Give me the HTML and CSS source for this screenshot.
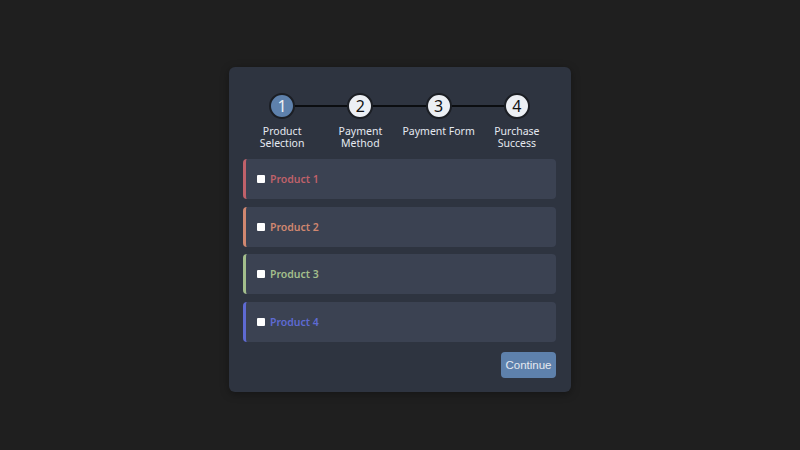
FILE: index.html
```html
<!DOCTYPE html>
<html>
<head>
<meta charset="utf-8">
<link rel="stylesheet" href="styles.css">
</head>
<body>
<div class="card">
  <div class="stepper">
    <div class="line"></div>
    <div class="step active"><div class="dot">1</div><div class="label">Product<br>Selection</div></div>
    <div class="step"><div class="dot">2</div><div class="label">Payment<br>Method</div></div>
    <div class="step"><div class="dot">3</div><div class="label">Payment Form</div></div>
    <div class="step"><div class="dot">4</div><div class="label">Purchase<br>Success</div></div>
  </div>
  <div class="items">
    <label class="item c1"><span class="box"></span><span class="name">Product 1</span></label>
    <label class="item c2"><span class="box"></span><span class="name">Product 2</span></label>
    <label class="item c3"><span class="box"></span><span class="name">Product 3</span></label>
    <label class="item c4"><span class="box"></span><span class="name">Product 4</span></label>
  </div>
  <div class="actions"><button class="btn">Continue</button></div>
</div>
</body>
</html>
```
FILE: styles.css
```css
html, body { margin: 0; padding: 0; }
body {
  background: #1f1f1f;
  width: 800px;
  height: 450px;
  display: flex;
  justify-content: center;
  align-items: flex-start;
  font-family: "Noto Sans", sans-serif;
}
.card {
  margin-top: 67px;
  width: 313px;
  padding: 26px 15px 14px 14px;
  background: #2e3440;
  border-radius: 6px;
  box-shadow: 0 2px 8px rgba(0,0,0,0.35);
}
.stepper {
  position: relative;
  display: flex;
}
.line {
  position: absolute;
  left: 39px;
  right: 39px;
  top: 12px;
  height: 2px;
  background: #0b0d10;
}
.step {
  flex: 1;
  display: flex;
  flex-direction: column;
  align-items: center;
  position: relative;
}
.dot {
  width: 22px;
  height: 22px;
  border: 2px solid #1b1e24;
  border-radius: 50%;
  background: #eceff4;
  color: #111;
  font-size: 16px;
  line-height: 22px;
  text-align: center;
}
.step.active .dot { background: #5e81ac; color: #eceff4; }
.label {
  margin-top: 5.5px;
  color: #e5e9f0;
  font-size: 10.5px;
  line-height: 12.5px;
  text-align: center;
}
.items {
  margin-top: 9.5px;
  display: flex;
  flex-direction: column;
  gap: 7.5px;
}
.item {
  height: 40px;
  background: #3b4252;
  border-radius: 4px;
  border-left: 3px solid;
  display: flex;
  align-items: center;
  padding-left: 11px;
  box-sizing: border-box;
}
.box {
  width: 8px;
  height: 8px;
  background: #fff;
  border-radius: 1px;
}
.name {
  margin-left: 5px;
  font-weight: 600;
  font-size: 10.5px;
}
.c1 { border-color: #bf616a; color: #bf616a; }
.c2 { border-color: #d08770; color: #d08770; }
.c3 { border-color: #a3be8c; color: #a3be8c; }
.c4 { border-color: #5e6ad2; color: #5e6ad2; }
.actions {
  margin-top: 10px;
  display: flex;
  justify-content: flex-end;
}
.btn {
  width: 55px;
  height: 26px;
  border: none;
  border-radius: 4px;
  background: #5e81ac;
  color: #e5e9f0;
  font-family: "Liberation Sans", Arial, sans-serif;
  font-size: 11.5px;
  padding: 0;
}
```
